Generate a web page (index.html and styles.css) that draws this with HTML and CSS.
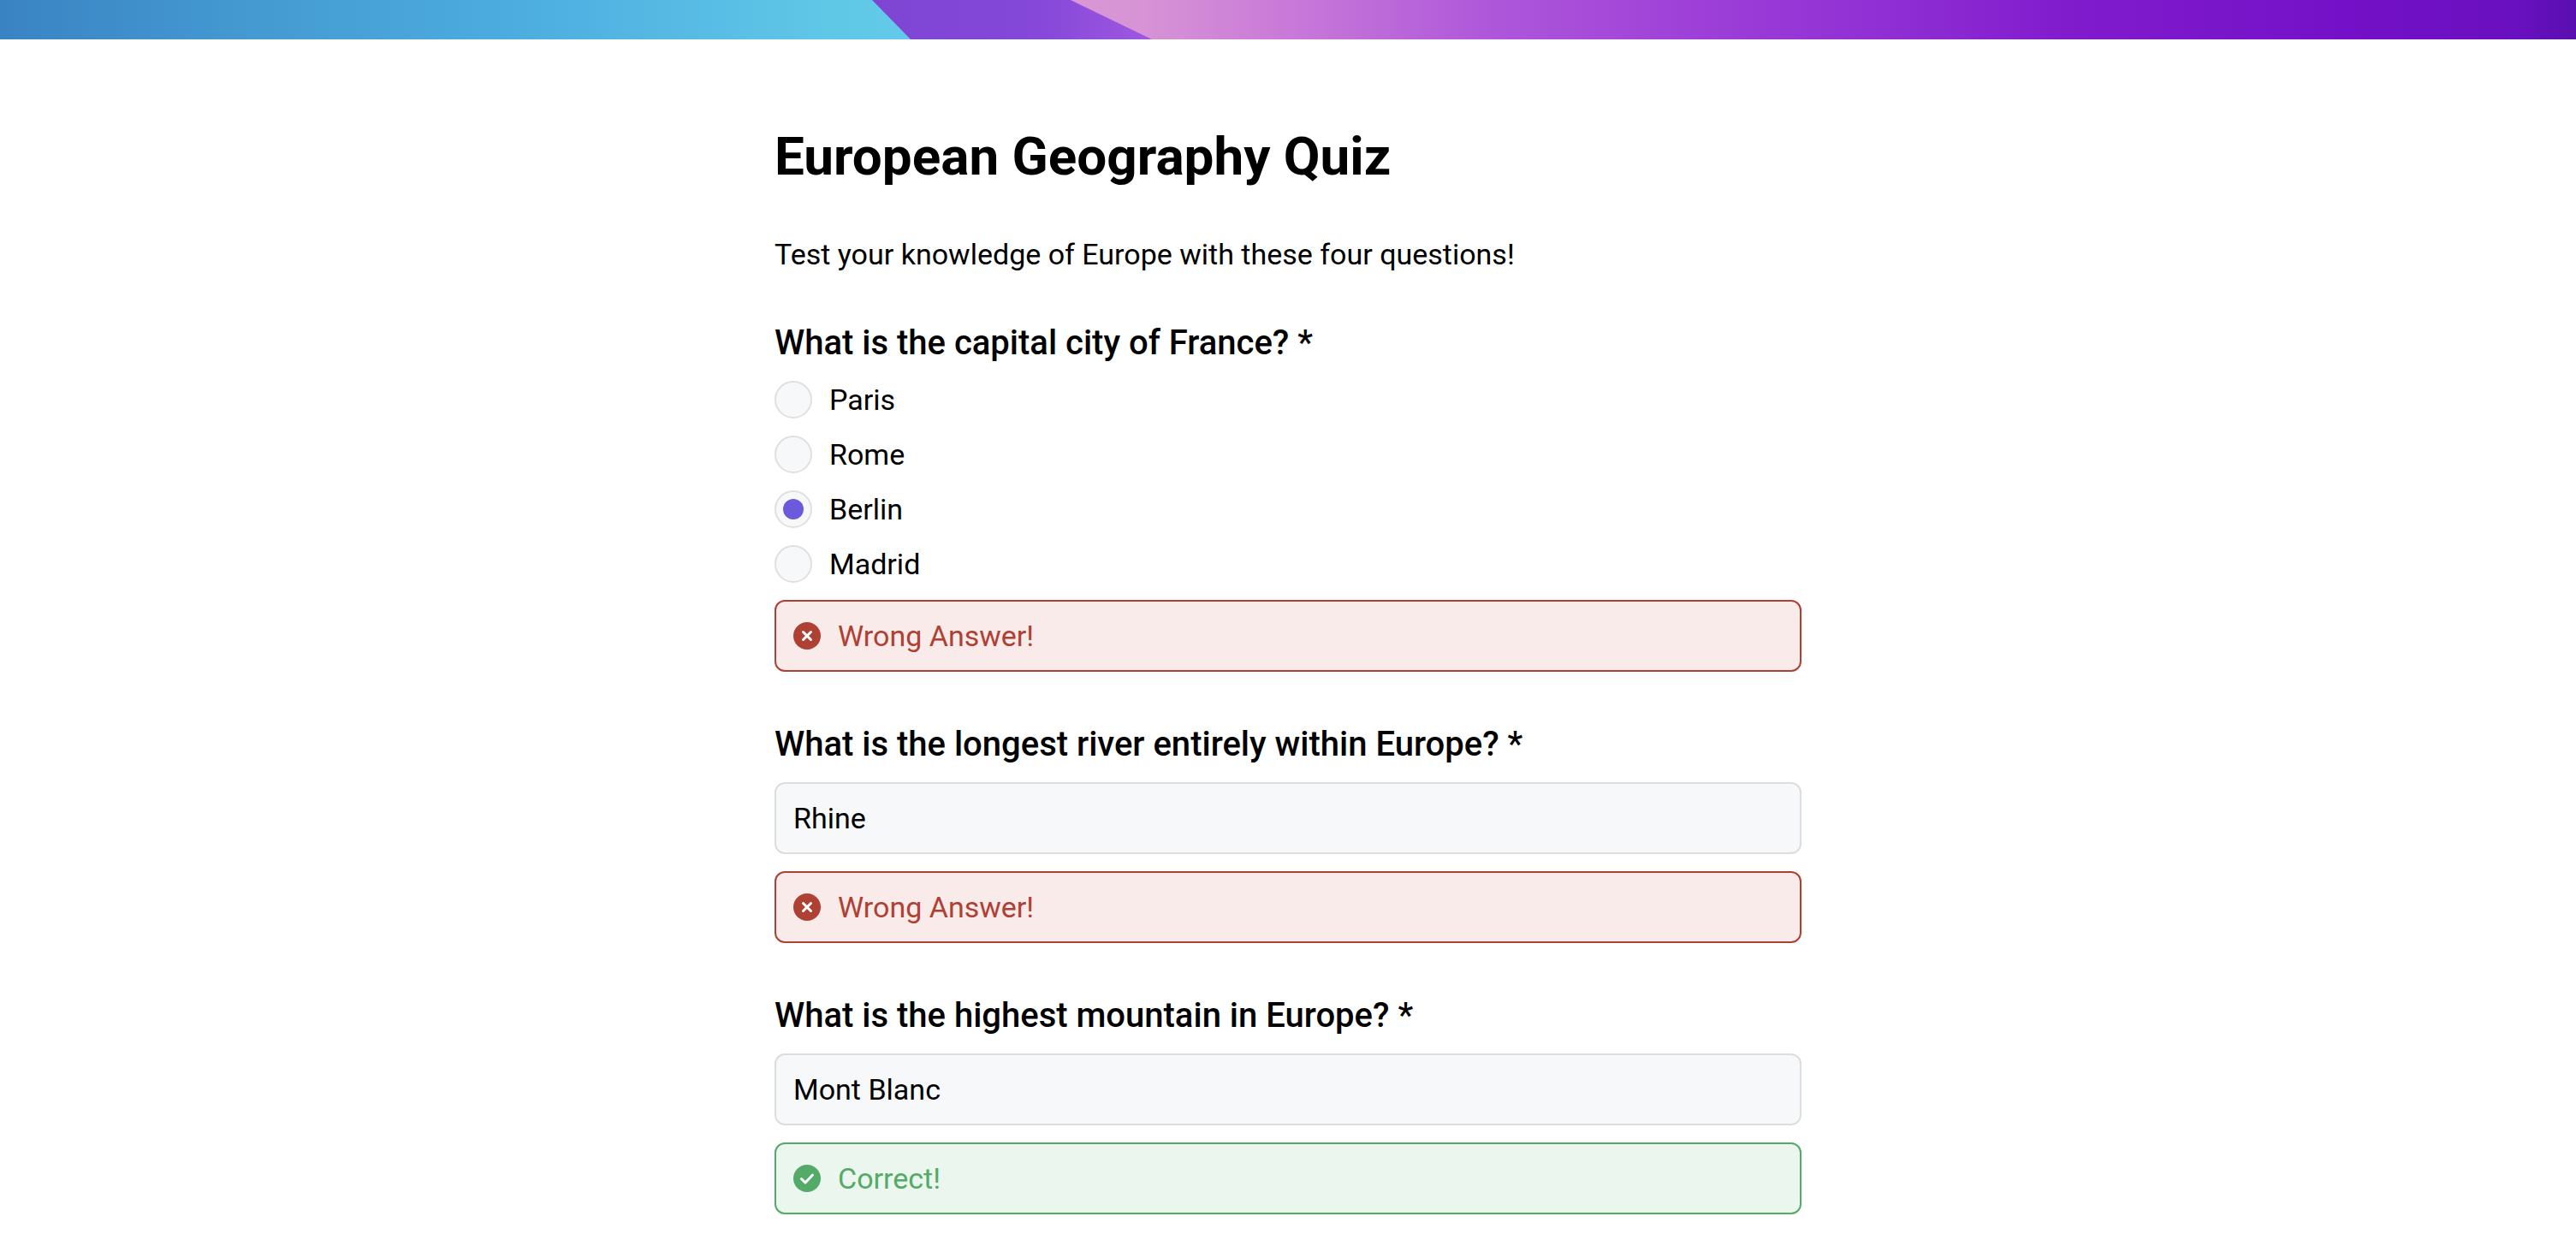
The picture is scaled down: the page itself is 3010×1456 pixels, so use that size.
FILE: index.html
```
<!DOCTYPE html>
<html lang="en">
<head>
  <meta charset="utf-8">
  <meta name="viewport" content="width=device-width, initial-scale=1">
  <title>European Geography Quiz</title>
  <link rel="stylesheet" href="styles.css">
</head>
<body>
  <header class="cover">
    <svg class="cover-art" viewBox="0 0 3010 46" preserveAspectRatio="none" aria-hidden="true">
      <defs>
        <linearGradient id="blue" gradientUnits="userSpaceOnUse" x1="0" y1="0" x2="1064" y2="0">
          <stop offset="0" stop-color="#3a83c3"/>
          <stop offset=".25" stop-color="#4398d0"/>
          <stop offset=".6" stop-color="#4eafe1"/>
          <stop offset=".92" stop-color="#60c8e7"/>
          <stop offset="1" stop-color="#63cbe9"/>
        </linearGradient>
        <linearGradient id="violet" gradientUnits="userSpaceOnUse" x1="1020" y1="0" x2="1346" y2="0">
          <stop offset="0" stop-color="#7e45d3"/>
          <stop offset=".6" stop-color="#8548d9"/>
          <stop offset="1" stop-color="#a058e0"/>
        </linearGradient>
        <linearGradient id="pink" gradientUnits="userSpaceOnUse" x1="1250" y1="0" x2="3010" y2="0">
          <stop offset="0" stop-color="#d998d4"/>
          <stop offset=".05" stop-color="#d793d5"/>
          <stop offset=".15" stop-color="#c878d9"/>
          <stop offset=".28" stop-color="#ae57da"/>
          <stop offset=".42" stop-color="#9d3fd8"/>
          <stop offset=".54" stop-color="#902fd4"/>
          <stop offset=".66" stop-color="#811ccd"/>
          <stop offset=".85" stop-color="#7410c7"/>
          <stop offset=".96" stop-color="#6910c0"/>
          <stop offset="1" stop-color="#590fb0"/>
        </linearGradient>
      </defs>
      <path fill="url(#violet)" d="M1000 0h400v46h-400z"/>
      <path fill="url(#blue)" d="M0 0h1019l45 46H0z"/>
      <path fill="url(#pink)" d="M1251 0h1759v46H1346z"/>
    </svg>
  </header>

  <main class="page">
    <h1 class="title">European Geography Quiz</h1>
    <p class="intro">Test your knowledge of Europe with these four questions!</p>

    <form class="quiz">
      <fieldset class="question">
        <legend class="question-title">What is the capital city of France? *</legend>
        <div class="options">
          <label class="option"><input class="radio" type="radio" name="capital" value="paris">Paris</label>
          <label class="option"><input class="radio" type="radio" name="capital" value="rome">Rome</label>
          <label class="option"><input class="radio" type="radio" name="capital" value="berlin" checked>Berlin</label>
          <label class="option"><input class="radio" type="radio" name="capital" value="madrid">Madrid</label>
        </div>
        <div class="feedback feedback-wrong">
          <svg class="feedback-icon" viewBox="0 0 32 32" aria-hidden="true">
            <circle cx="16" cy="16" r="16" fill="currentColor"/>
            <path class="glyph" d="M11.5 11.5l9 9M20.5 11.5l-9 9"/>
          </svg>
          <span>Wrong Answer!</span>
        </div>
      </fieldset>

      <div class="question">
        <label class="question-title" for="river">What is the longest river entirely within Europe? *</label>
        <input class="answer" id="river" type="text" value="Rhine">
        <div class="feedback feedback-wrong">
          <svg class="feedback-icon" viewBox="0 0 32 32" aria-hidden="true">
            <circle cx="16" cy="16" r="16" fill="currentColor"/>
            <path class="glyph" d="M11.5 11.5l9 9M20.5 11.5l-9 9"/>
          </svg>
          <span>Wrong Answer!</span>
        </div>
      </div>

      <div class="question">
        <label class="question-title" for="mountain">What is the highest mountain in Europe? *</label>
        <input class="answer" id="mountain" type="text" value="Mont Blanc">
        <div class="feedback feedback-right">
          <svg class="feedback-icon" viewBox="0 0 32 32" aria-hidden="true">
            <circle cx="16" cy="16" r="16" fill="currentColor"/>
            <path class="glyph" d="M9.5 16.500l4.500 4.500L22.500 12"/>
          </svg>
          <span>Correct!</span>
        </div>
      </div>
    </form>
  </main>
</body>
</html>
```
FILE: styles.css
```
* {
  box-sizing: border-box;
}

body {
  margin: 0;
  background: #fff;
  color: #000;
  font-family: Roboto, "Liberation Sans", sans-serif;
  font-size: 34px;
  line-height: 48px;
}

.cover-art {
  display: block;
  width: 100%;
  height: 46px;
}

.page {
  max-width: 1240px;
  margin: 0 auto;
  padding: 101px 20px 36px;
}

.title {
  margin: 0 0 54px;
  font-size: 62px;
  line-height: 72px;
  font-weight: 700;
}

.intro {
  margin: 0 0 52px;
}

.quiz {
  display: flex;
  flex-direction: column;
  gap: 57px;
}

.question {
  min-width: 0;
  margin: 0;
  padding: 0;
  border: 0;
}

.question-title {
  display: block;
  margin-bottom: 16px;
  padding: 0;
  font-size: 40px;
  line-height: 56px;
  font-weight: 500;
}

.options {
  display: grid;
  gap: 20px;
}

.option {
  display: flex;
  align-items: center;
  gap: 20px;
  height: 44px;
}

.radio {
  appearance: none;
  display: grid;
  place-items: center;
  width: 44px;
  height: 44px;
  margin: 0;
  border: 2px solid #dfe0e2;
  border-radius: 50%;
  background: #f7f8fa;
}

.radio:checked::before {
  content: "";
  width: 24px;
  height: 24px;
  border-radius: 50%;
  background: #6b5bdc;
}

.answer {
  display: block;
  width: 100%;
  height: 84px;
  padding: 0 20px;
  border: 2px solid #dcdddf;
  border-radius: 12px;
  background: #f7f8fa;
  color: inherit;
  font: inherit;
}

.feedback {
  display: flex;
  align-items: center;
  gap: 20px;
  height: 84px;
  margin-top: 20px;
  padding: 0 20px;
  border: 2px solid currentColor;
  border-radius: 12px;
}

.feedback-wrong {
  background: #f8ebea;
  color: #af4034;
}

.feedback-right {
  background: #ebf6ee;
  color: #54aa67;
}

.feedback-icon {
  width: 32px;
  height: 32px;
}

.glyph {
  fill: none;
  stroke: #fff;
  stroke-width: 3;
  stroke-linecap: round;
  stroke-linejoin: round;
}
```
